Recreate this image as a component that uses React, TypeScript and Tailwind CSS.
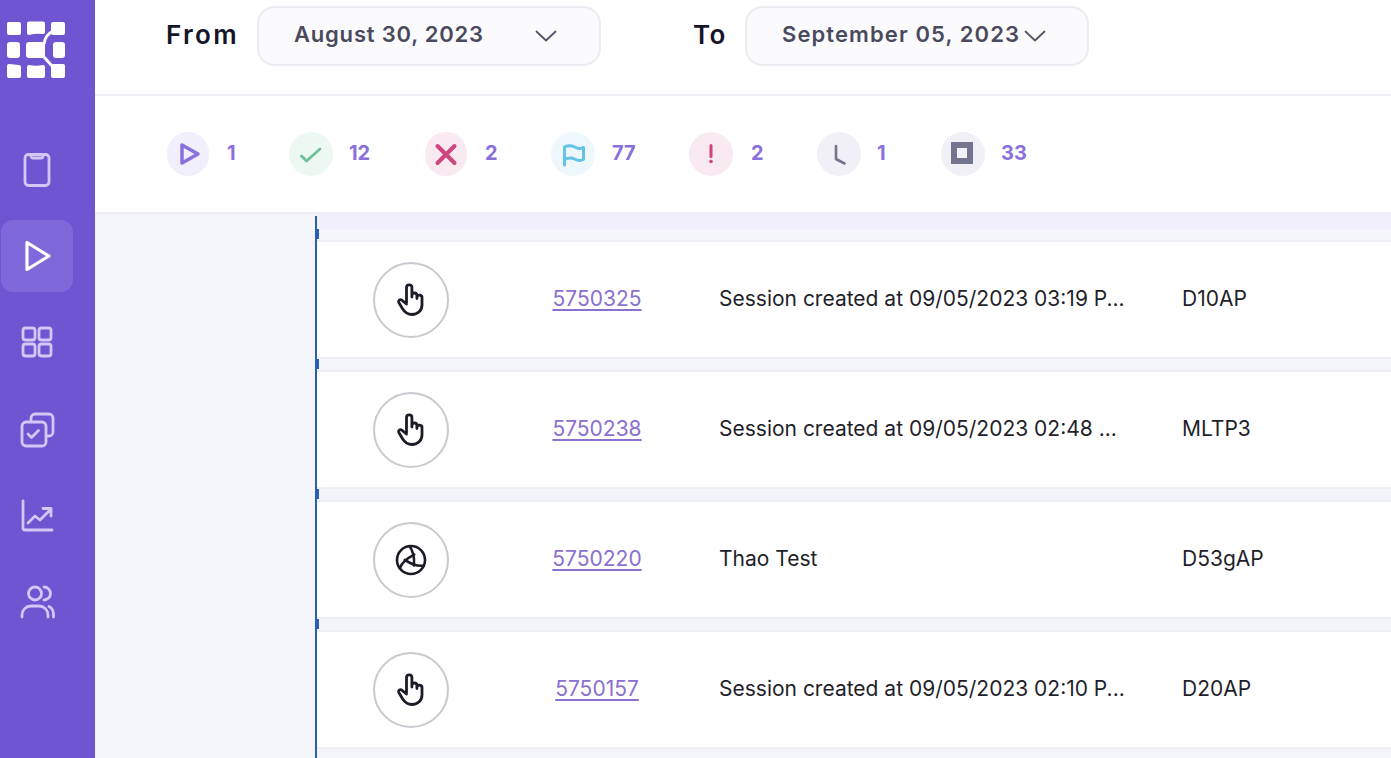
import React from "react";

const font = { fontFamily: '"Inter", "Noto Sans", sans-serif' };

function LogoMark() {
  return (
    <svg width="60" height="58" viewBox="0 0 60 58" fill="#fff" className="block">
      <path d="M2.500 1H13Q15 1 15 3V12Q15 14 13 14H3Q1 14 1 12V2.500Q1 1 2.500 1Z" />
      <path d="M23 .500H37Q39 .500 39 2.500V11Q39 13 37 13Q30 12 23 14Q21 14 21 12V2.500Q21 .500 23 .500Z" />
      <rect x="45" y="1" width="14" height="13" rx="2" />
      <rect x="1" y="21" width="13" height="16" rx="3" />
      <rect x="20" y="21" width="19" height="16" rx="3" />
      <rect x="47" y="21" width="12" height="16" rx="3" />
      <path d="M3 43L13 44Q15 44 15 46V55Q15 57 13 57H3Q1 57 1 55V45Q1 43 3 43Z" />
      <path d="M23 44Q30 45.500 37 44Q39 44 39 46V55Q39 57 37 57H23Q21 57 21 55V46Q21 44 23 44Z" />
      <rect x="45" y="43" width="14" height="14" rx="2" />
      <path d="M38 23Q39 14 47 10M38 36L47 46" fill="none" stroke="#fff" strokeWidth="3" />
    </svg>
  );
}

function NavIcon({ children, active, extra }: { children: React.ReactNode; active?: boolean; extra?: string }) {
  return (
    <div className={`w-[72px] h-[72px] ml-[1px] rounded-[12px] flex items-center justify-center ${active ? "bg-[#7f68da]" : ""} ${extra ?? ""}`}>
      <svg width="36" height="36" viewBox="0 0 36 36" fill="none" stroke={active ? "#ffffff" : "#d2c7f6"} strokeWidth="2.800" strokeLinecap="round" strokeLinejoin="round">
        {children}
      </svg>
    </div>
  );
}

function Stat({ bg, children, n, w, narrow, ml }: { bg: string; children: React.ReactNode; n: string; w: string; narrow?: boolean; ml: string }) {
  return (
    <div className={`flex items-center ${w}`}>
      <div className={`${narrow ? "w-[42px]" : "w-[44px]"} h-[44px] rounded-full flex items-center justify-center shrink-0 ${bg}`}>
        <svg width="28" height="28" viewBox="0 0 28 28" fill="none" strokeLinecap="round" strokeLinejoin="round">
          {children}
        </svg>
      </div>
      <span className={`${ml} -mt-[2px] text-[20px] font-bold text-[#8a70da] leading-none`}>{n}</span>
    </div>
  );
}

function DateBox({ text, track, gap }: { text: string; track: string; gap: string }) {
  return (
    <div className="w-[344px] pl-[35px] h-[60px] rounded-[18px] border-2 border-[#ececf3] bg-[#fbfbfd] flex items-center">
      <span className={`text-[22px] font-semibold ${track} text-[#4a4a5e] whitespace-nowrap -mt-[3px]`}>{text}</span>
      <svg className={`${gap} shrink-0`} width="24" height="14" viewBox="0 0 24 14" fill="none" stroke="#55556a" strokeWidth="1.800" strokeLinecap="round" strokeLinejoin="round">
        <path d="M2.500 2.500L12 11.500L21.500 2.500" />
      </svg>
    </div>
  );
}

function Hand() {
  return (
    <svg width="30" height="34" viewBox="0 0 30 34" fill="none" stroke="#1c1c28" strokeWidth="2.800" strokeLinecap="round" strokeLinejoin="round">
      <path d="M10.500 20V4.500a2.700 2.700 0 0 1 5.400 0V14M15.900 12.500a2.500 2.500 0 0 1 5 0V15.500M20.900 14.500a2.500 2.500 0 0 1 5.100.5V22c0 5.500-4.300 9.500-10 9.500-4.200 0-6.800-1.500-9.300-5.500L2.800 19.500c-.9-1.800 1.300-3.700 3-2.300L10.500 21" />
    </svg>
  );
}

function Aperture() {
  const blade = "M15.500 3.200C19 7.500 20.500 14 20 22.500";
  return (
    <svg width="34" height="34" viewBox="0 0 34 34" fill="none" stroke="#1c1c28" strokeWidth="2.600" strokeLinecap="round" strokeLinejoin="round">
      <circle cx="17" cy="17" r="14" />
      <path d={blade} />
      <path d={blade} transform="rotate(120 17 17)" />
      <path d={blade} transform="rotate(240 17 17)" />
    </svg>
  );
}

function Row({ icon, id, desc, code }: { icon: React.ReactNode; id: string; desc: string; code: string }) {
  return (
    <div className="h-[119px] shrink-0 bg-white border-y-2 border-[#eeeef5] flex items-center">
      <div className="w-[56px]" />
      <div className="w-[76px] h-[76px] rounded-full border-2 border-[#c9c9d0] flex items-center justify-center shrink-0">{icon}</div>
      <div className="w-[270px] pl-[26px] shrink-0 -mt-[2px] text-center text-[21px] text-[#8a70cf] underline underline-offset-[3px]">{id}</div>
      <div className="w-[463px] shrink-0 -mt-[2px] text-[21px] text-[#1f1f2b] whitespace-nowrap">{desc}</div>
      <div className="-mt-[2px] text-[21px] text-[#1f1f2b]">{code}</div>
    </div>
  );
}

function Gap() {
  return (
    <div className="h-[11px] shrink-0 relative">
      <div className="absolute left-[-2px] bottom-[1px] w-[4px] h-[10px] bg-[#2b5fb3]" />
    </div>
  );
}

export default function App() {
  return (
    <div className="w-[1391px] h-[758px] overflow-hidden flex bg-white" style={font}>
      <aside className="w-[95px] shrink-0 bg-[#6f55d2] flex flex-col">
        <div className="pt-[21px] pl-[6px] h-[134px]">
          <LogoMark />
        </div>
        <div className="flex flex-col gap-[14px]">
          <NavIcon>
            <rect x="6" y="2.500" width="24" height="31" rx="3.500" />
            <path d="M12 2.500v1.500a2 2 0 0 0 2 2h8a2 2 0 0 0 2-2V2.500" />
          </NavIcon>
          <NavIcon active>
            <path d="M8 4.500v27l22-13.500z" strokeWidth="3.200" />
          </NavIcon>
          <NavIcon>
            <rect x="4" y="4" width="12" height="12" rx="2.500" />
            <rect x="20" y="4" width="12" height="12" rx="2.500" />
            <rect x="4" y="20" width="12" height="12" rx="2.500" />
            <rect x="20" y="20" width="12" height="12" rx="2.500" />
          </NavIcon>
          <NavIcon extra="mt-[2px]">
            <path d="M12 8V6a4 4 0 0 1 4-4h14a4 4 0 0 1 4 4v14a4 4 0 0 1-4 4h-2" />
            <rect x="3" y="10" width="24" height="24" rx="4" />
            <path d="M9 22l3.500 3.500l7-7" />
          </NavIcon>
          <NavIcon>
            <path d="M4 3v27a2 2 0 0 0 2 2h27" />
            <path d="M9 25l7-7l5 4l11-11M24 10.500h8V18" />
          </NavIcon>
          <NavIcon>
            <circle cx="16" cy="9.500" r="6.500" />
            <path d="M3 33v-2c0-5 4-9 9-9h8c5 0 9 4 9 9v2M25 3a6.500 6.500 0 0 1 0 13M30 22.500c3 1.500 4.500 4.500 4.500 8v2.500" />
          </NavIcon>
        </div>
      </aside>

      <main className="flex-1 min-w-0 flex flex-col">
        <header className="h-[96px] shrink-0 border-b-2 border-[#ededf3] flex items-center pl-[71px] pb-[22px]">
          <span className="text-[26px] font-semibold tracking-[0.09em] text-[#15152a] -mt-[3px] w-[91px]">From</span>
          <DateBox text="August 30, 2023" track="tracking-[0.036em]" gap="ml-[50px]" />
          <span className="ml-[92px] w-[52px] text-[26px] font-semibold tracking-[0.05em] text-[#15152a] -mt-[3px]">To</span>
          <DateBox text="September 05, 2023" track="tracking-[0.05em]" gap="ml-[3px]" />
        </header>

        <section className="h-[116px] shrink-0 flex items-center pl-[72px]">
          <Stat bg="bg-[#f2effc]" n="1" w="w-[122px]" narrow ml="ml-[18px]">
            <path d="M8 5v18l16-9z" stroke="#8a6fe0" strokeWidth="3.500" />
          </Stat>
          <Stat bg="bg-[#eef8f3]" n="12" w="w-[136px]" ml="ml-[16px]">
            <path d="M4.500 16l5 5L23 9" stroke="#6cc09a" strokeWidth="2.800" />
          </Stat>
          <Stat bg="bg-[#f9e9f0]" n="2" w="w-[126px]" narrow ml="ml-[18px]">
            <path d="M5.500 6l17 17M22.500 6l-17 17" stroke="#d0457f" strokeWidth="4" />
          </Stat>
          <Stat bg="bg-[#eef7fc]" n="77" w="w-[138px]" ml="ml-[17px]">
            <path d="M5.500 25V7c4-2 7-1.500 10 0s6 2 9 .5v12c-3 1.500-6 1-9-.5s-6-1.500-10 .5" stroke="#62c3e6" strokeWidth="3" />
          </Stat>
          <Stat bg="bg-[#f9e9f0]" n="2" w="w-[128px]" ml="ml-[18px]">
            <path d="M14 5.500v11" stroke="#d0457f" strokeWidth="3" />
            <circle cx="14" cy="21.500" r="1.800" fill="#d0457f" />
          </Stat>
          <Stat bg="bg-[#f0f0f6]" n="1" w="w-[124px]" ml="ml-[16px]">
            <path d="M11 6v13l8.500 4.500" stroke="#74748f" strokeWidth="2.600" />
          </Stat>
          <Stat bg="bg-[#f0f0f6]" n="33" w="w-[120px]" ml="ml-[16px]">
            <rect x="5" y="5" width="16" height="16" stroke="#74748f" strokeWidth="6" strokeLinecap="butt" strokeLinejoin="miter" />
          </Stat>
        </section>

        <div className="flex-1 min-h-0 flex bg-[#f4f5fb] border-t-2 border-[#eeeef6]">
          <div className="w-[220px] shrink-0" />
          <div className="w-[2px] shrink-0 bg-[#2b5fa8] mt-[2px]" />
          <div className="flex-1 min-w-0 flex flex-col">
            <div className="h-[15px] shrink-0 bg-[#f1effc]" />
            <Gap />
            <Row icon={<Hand />} id="5750325" desc="Session created at 09/05/2023 03:19 P..." code="D10AP" />
            <Gap />
            <Row icon={<Hand />} id="5750238" desc="Session created at 09/05/2023 02:48 ..." code="MLTP3" />
            <Gap />
            <Row icon={<Aperture />} id="5750220" desc="Thao Test" code="D53gAP" />
            <Gap />
            <Row icon={<Hand />} id="5750157" desc="Session created at 09/05/2023 02:10 P..." code="D20AP" />
          </div>
        </div>
      </main>
    </div>
  );
}
